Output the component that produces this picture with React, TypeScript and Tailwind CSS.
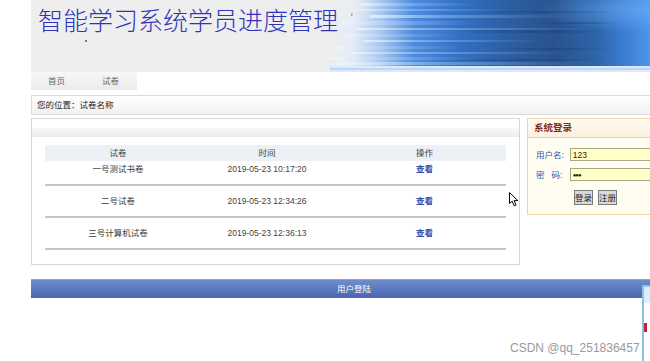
import React from "react";

const exams = [
  { name: "一号测试书卷", time: "2019-05-23 10:17:20", row: "h-[25px] items-start pt-[2px]" },
  { name: "二号试卷", time: "2019-05-23 12:34:26", row: "h-[32px] items-center" },
  { name: "三号计算机试卷", time: "2019-05-23 12:36:13", row: "h-[32px] items-center" },
];

// light streaks of the banner picture: [y, h, x, w]
const lights = [
  [3, 3, 30, 120], [9, 2, 22, 160], [15, 3, 40, 200], [21, 4, 12, 140],
  [28, 2, 26, 240], [34, 3, 16, 110], [40, 2, 34, 180], [46, 3, 6, 130],
  [52, 2, 20, 220], [57, 3, 2, 150], [62, 3, 8, 260],
];
const darks = [
  [11, 2, 140, 150], [30, 3, 120, 160], [48, 2, 160, 120], [59, 2, 100, 180], [22, 2, 200, 90],
];

const Banner = () => (
  <svg width="320" height="72" viewBox="0 0 320 72" className="block shrink-0">
    <defs>
      <linearGradient id="base" x1="0" x2="1" y1="0" y2="0">
        <stop offset="0" stopColor="#eeeeee" />
        <stop offset="0.07" stopColor="#e4ecf8" />
        <stop offset="0.16" stopColor="#a6c6f0" />
        <stop offset="0.26" stopColor="#4d8ce0" />
        <stop offset="0.4" stopColor="#3170c4" />
        <stop offset="0.55" stopColor="#2d5fa4" />
        <stop offset="0.7" stopColor="#28528f" />
        <stop offset="0.83" stopColor="#2e64a8" />
        <stop offset="0.93" stopColor="#3c80d6" />
        <stop offset="1" stopColor="#4f96ea" />
      </linearGradient>
      <linearGradient id="lt" x1="0" x2="1" y1="0" y2="0">
        <stop offset="0" stopColor="#f4f8fe" stopOpacity="0.75" />
        <stop offset="0.35" stopColor="#bcd7f7" stopOpacity="0.4" />
        <stop offset="1" stopColor="#9cc4f4" stopOpacity="0" />
      </linearGradient>
      <linearGradient id="dk" x1="0" x2="1" y1="0" y2="0">
        <stop offset="0" stopColor="#163768" stopOpacity="0" />
        <stop offset="0.5" stopColor="#163768" stopOpacity="0.35" />
        <stop offset="1" stopColor="#163768" stopOpacity="0" />
      </linearGradient>
      <linearGradient id="fade" x1="0" x2="1" y1="0" y2="0">
        <stop offset="0" stopColor="#eeeeee" stopOpacity="1" />
        <stop offset="1" stopColor="#eeeeee" stopOpacity="0" />
      </linearGradient>
      <radialGradient id="glow" cx="1" cy="0.15" r="0.35">
        <stop offset="0" stopColor="#62a8f4" stopOpacity="0.8" />
        <stop offset="1" stopColor="#62a8f4" stopOpacity="0" />
      </radialGradient>
      <filter id="blur" x="-0.1" y="-1" width="1.2" height="3">
        <feGaussianBlur stdDeviation="1.5 0.6" />
      </filter>
    </defs>
    <rect x="0" y="0" width="320" height="66" fill="url(#base)" />
    <rect x="0" y="0" width="320" height="66" fill="url(#glow)" />
    <g filter="url(#blur)">
      {darks.map(([y, h, x, w], i) => (
        <rect key={"d" + i} x={x} y={y} width={w} height={h} fill="url(#dk)" />
      ))}
      {lights.map(([y, h, x, w], i) => (
        <rect key={"l" + i} x={x} y={y} width={w} height={h} fill="url(#lt)" />
      ))}
    </g>
    <rect x="0" y="0" width="45" height="20" fill="url(#fade)" />
    <rect x="0" y="66" width="320" height="6" fill="#dbe9fa" />
    <rect x="0" y="68" width="320" height="2" fill="#a8c9f0" opacity="0.6" />
    <rect x="21" y="13" width="1.5" height="3" fill="#e0a050" />
  </svg>
);

const Cursor = () => (
  <svg width="10" height="15" viewBox="0 0 10 15" className="absolute left-[509px] top-[192px]">
    <path d="M0.5 0.5 L0.5 11.5 L3.2 9.2 L5.2 13.8 L7 13 L5.1 8.6 L8.8 8.6 Z" fill="#fff" stroke="#000" strokeWidth="1" strokeLinejoin="round" />
  </svg>
);

export default function App() {
  return (
    <div className="relative w-[650px] h-[361px] overflow-hidden bg-white text-[8.5px] leading-[12px] text-[#3a3a3a] font-['Liberation_Sans','Noto_Sans_CJK_SC',sans-serif]">
      <div className="ml-[31px] w-[646px]">
        {/* header */}
        <div className="flex h-[72px]">
          <div className="w-[299px] bg-[#eeeeee] relative">
            <div className="pl-[7px] pt-[7px] text-[25px] leading-[25px] font-light text-[#2f35bb] font-['Noto_Sans_CJK_SC',sans-serif] whitespace-nowrap">
              智能学习系统学员进度管理
            </div>
            <div className="absolute left-[54px] top-[40px] w-[1.5px] h-[1.5px] bg-[#777]" />
          </div>
          <Banner />
        </div>

        {/* nav */}
        <div className="flex h-[18px]">
          <div className="w-[106px] flex items-center bg-linear-to-b from-[#f7f7f7] to-[#ebebeb] text-[#666]">
            <span className="ml-[17px]">首页</span>
            <span className="ml-[37px]">试卷</span>
          </div>
        </div>

        {/* breadcrumb */}
        <div className="mt-[5px] h-[20px] flex items-center border border-[#dcdcdc] bg-linear-to-b from-white to-[#f1f1f1] pl-[5px] text-[#222]">
          您的位置：试卷名称
        </div>

        {/* main */}
        <div className="mt-[3px] flex items-start gap-[7px]">
          <div className="w-[489px] h-[147px] border border-[#d6d6d6] bg-white">
            <div className="mt-[9px] h-[9px] bg-linear-to-b from-[#f8f8f8] to-[#ececec]" />
            <div className="mt-[8px] mx-[13px]">
              <div className="flex h-[16px] items-center bg-[#edf0f5] text-[#444]">
                <div className="w-[146px] text-center">试卷</div>
                <div className="w-[152px] text-center">时间</div>
                <div className="flex-1 text-center">操作</div>
              </div>
              {exams.map((e) => (
                <div key={e.name} className={`flex border-b-2 border-[#c6c6c6] ${e.row}`}>
                  <div className="w-[146px] text-center">{e.name}</div>
                  <div className="w-[152px] text-center text-[#444]">{e.time}</div>
                  <div className="flex-1 text-center text-[#2c4fa8] font-bold">查看</div>
                </div>
              ))}
            </div>
          </div>

          <div className="w-[140px] h-[97px] border border-[#f0d4a8] bg-[#fffcf1]">
            <div className="h-[19px] flex items-center border-b border-[#f3cb9b] bg-linear-to-b from-[#fffbf4] to-[#fdf0dd] pl-[6px] text-[9.5px] font-bold text-[#7b2b1b]">
              系统登录
            </div>
            <div className="pt-[10px] flex flex-col gap-[7px]">
              <div className="flex items-center">
                <div className="w-[43px] pl-[8px] text-[#2f55b0]">用户名:</div>
                <div className="w-[100px] h-[13px] flex items-center border border-[#a9a98a] bg-[#ffffc6] pl-[2px] text-[#222]">123</div>
              </div>
              <div className="flex items-center">
                <div className="w-[43px] pl-[8px] text-[#2f55b0] whitespace-pre">密   码:</div>
                <div className="w-[100px] h-[13px] flex items-center border border-[#a9a98a] bg-[#ffffc6] pl-[2px] text-[#222] text-[6px] tracking-[-1px]">●●●</div>
              </div>
            </div>
            <div className="mt-[9px] ml-[46px] flex gap-[5px]">
              <div className="w-[19px] h-[15px] flex items-center justify-center border border-[#7a7a7a] bg-[#d9d9d9] text-[#222]">登录</div>
              <div className="w-[19px] h-[15px] flex items-center justify-center border border-[#7a7a7a] bg-[#d9d9d9] text-[#222]">注册</div>
            </div>
          </div>
        </div>

        {/* footer bar */}
        <div className="mt-[14px] h-[19px] flex items-center justify-center border-t border-[#8ca4d8] bg-linear-to-b from-[#6f8dcd] to-[#4a64ae] text-white">
          用户登陆
        </div>
      </div>

      {/* floating widget at right edge */}
      <div className="absolute left-[642px] top-[285px] w-[20px] h-[76px] border-l-2 border-t-2 border-[#8fc0e0] bg-white">
        <div className="h-[16px] bg-[#dbeefa]" />
        <div className="mt-[20px] w-[3px] h-[9px] bg-[#c0203a]" />
      </div>

      <div className="absolute left-[510px] top-[341px] text-[12px] leading-[14px] text-[#9a9a9a] font-['Liberation_Sans',sans-serif] whitespace-nowrap">
        CSDN @qq_251836457
      </div>

      <Cursor />
    </div>
  );
}
